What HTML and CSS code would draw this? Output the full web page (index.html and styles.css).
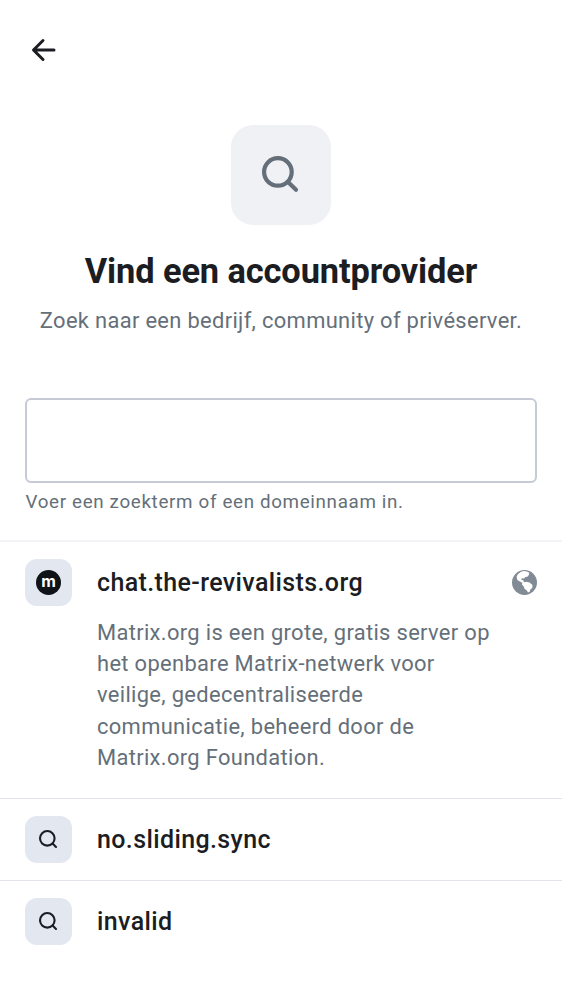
FILE: index.html
```html
<!DOCTYPE html>
<html lang="nl">
<head>
<meta charset="utf-8">
<title>Accountprovider</title>
<link rel="stylesheet" href="styles.css">
</head>
<body>
<main class="screen">
  <nav class="topbar">
    <svg class="back" viewBox="0 0 32 32" fill="none" stroke="currentColor" stroke-width="3" stroke-linecap="round" stroke-linejoin="round"><path d="M26 16H6M15 6.500 5.500 16l9.500 9.500"/></svg>
  </nav>
  <header class="hero">
    <div class="hero-icon">
      <svg viewBox="0 0 50 50" fill="none" stroke="currentColor" stroke-width="4.200" stroke-linecap="round"><circle cx="21.900" cy="21.900" r="13.800"/><path d="m32 32 8 7.700"/></svg>
    </div>
    <h1 class="title">Vind een accountprovider</h1>
    <p class="subtitle">Zoek naar een bedrijf, community of privéserver.</p>
  </header>
  <section class="search">
    <input class="field" type="text" aria-label="Zoekterm">
    <p class="hint">Voer een zoekterm of een domeinnaam in.</p>
  </section>
  <ul class="list">
    <li class="item item-main">
      <div class="row">
        <span class="badge"><span class="matrix">m</span></span>
        <span class="name">chat.the-revivalists.org</span>
        <svg class="globe" viewBox="0 0 25 25"><circle cx="12.500" cy="12.500" r="12.500" fill="#818a95"/><path fill="#fff" d="M9.500 1.600 12.500 1 16.500 1.900 17.300 4 15.800 6.500 13 7.200 12.300 8.600 9.800 8.300 9.300 9.800 11.300 10.200 12 12.200 14.500 11.800 17.500 12.500 20.500 15 20.300 18 18.300 19.500 17.800 21.800 16 22.600 14.800 20.500 12.500 18.800 11.900 16.800 10 14.500 10.300 12.700 7.800 11.600 5.300 10 4.600 6.800 6 4Z"/></svg>
      </div>
      <p class="description">Matrix.org is een grote, gratis server op<br>het openbare Matrix-netwerk voor<br>veilige, gedecentraliseerde<br>communicatie, beheerd door de<br>Matrix.org Foundation.</p>
    </li>
    <li class="item">
      <div class="row">
        <span class="badge"><svg class="mini" viewBox="0 0 25 25" fill="none" stroke="currentColor" stroke-width="2.100" stroke-linecap="round"><circle cx="11.300" cy="11.300" r="7.300"/><path d="m16.600 16.600 3.400 3.400"/></svg></span>
        <span class="name">no.sliding.sync</span>
      </div>
    </li>
    <li class="item">
      <div class="row">
        <span class="badge"><svg class="mini" viewBox="0 0 25 25" fill="none" stroke="currentColor" stroke-width="2.100" stroke-linecap="round"><circle cx="11.300" cy="11.300" r="7.300"/><path d="m16.600 16.600 3.400 3.400"/></svg></span>
        <span class="name">invalid</span>
      </div>
    </li>
  </ul>
</main>
</body>
</html>
```
FILE: styles.css
```css
* { box-sizing: border-box; }
body { margin: 0; background: #fff; color: #1b1d22; font-family: Roboto, sans-serif; }
.screen { width: 562px; height: 1000px; overflow: hidden; }
.topbar { height: 125px; padding: 34px 0 0 28px; }
.back { display: block; width: 32px; height: 32px; }
.hero { display: flex; flex-direction: column; align-items: center; }
.hero-icon { display: grid; place-items: center; width: 100px; height: 100px; border-radius: 22px; background: #f0f1f5; color: #656f79; }
.hero-icon svg { width: 50px; height: 50px; }
.title { margin: 25px 0 0; font-size: 34.4px; line-height: 42px; font-weight: 700; white-space: nowrap; letter-spacing: -0.11px; }
.subtitle { margin: 13.5px 0 0; font-size: 21.9px; line-height: 30px; letter-spacing: 0.33px; color: #656f79; white-space: nowrap; }
.search { padding: 62.5px 25px 0; }
.field { display: block; width: 100%; height: 85px; border: 2px solid #c5cad4; border-radius: 6px; background: #fff; }
.hint { margin: 7px 0 0; padding-left: 0.5px; font-size: 18.8px; line-height: 24px; letter-spacing: 0.66px; color: #656f79; }
.list { margin: 26px 0 0; padding: 0; list-style: none; }
.item { height: 82px; padding: 17px 25px 0; border-top: 1px solid #e1e4eb; }
.item-main { height: 258px; border-top: 2px solid #f2f3f6; }
.row { display: flex; align-items: center; height: 47px; }
.badge { display: grid; place-items: center; width: 47px; height: 47px; margin-right: 25px; border-radius: 12px; background: #e3e7f0; }
.matrix { width: 25px; height: 25px; border-radius: 50%; background: #101317; color: #fff; font: 700 16px/22px Inter, sans-serif; text-align: center; }
.mini { width: 25px; height: 25px; }
.name { font-size: 25px; line-height: 36px; font-weight: 500; letter-spacing: 0.38px; }
.globe { width: 25px; height: 25px; margin-left: auto; }
.description { margin: 10.9px 0 0 72px; font-size: 21.9px; line-height: 31.2px; letter-spacing: 0.34px; color: #656f79; }
```
